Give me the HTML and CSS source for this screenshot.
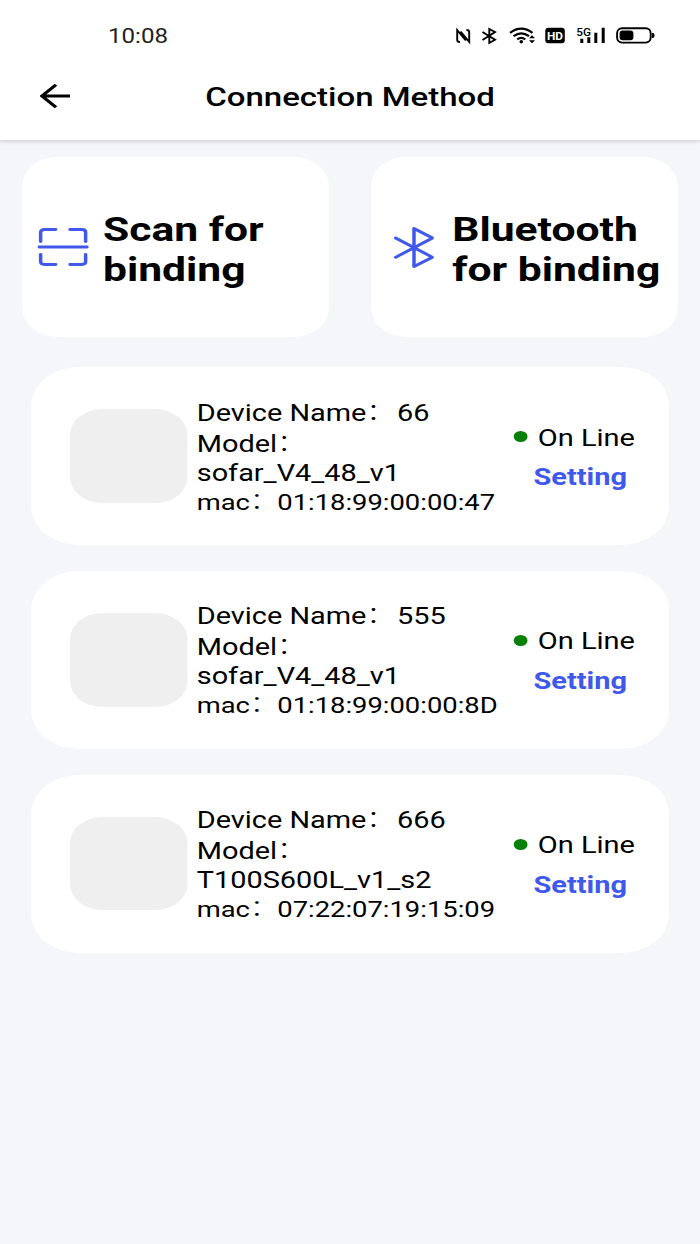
FILE: index.html
```html
<!DOCTYPE html>
<html lang="en">
<head>
    <meta charset="UTF-8">
    <meta name="viewport" content="width=device-width, initial-scale=1.0">
    <title>Connection Method</title>
    <link rel="stylesheet" href="styles.css">
</head>
<body>
    <div class="screen">
        <header class="header">
            <div class="status-bar">
                <span class="time">10:08</span>
                <svg class="status-icons" viewBox="456 24 200 24" preserveAspectRatio="none">
                    <!-- nfc -->
                    <path class="line" d="M461 42Q458.2 42 458.2 40V30.2L466.8 40.5M467.4 30Q470.2 30 470.2 32V41.8L461.6 31.5"/>
                    <!-- bluetooth -->
                    <path class="line" d="M483.5 32L496 39.8L490.3 43V29L496 32L483.5 40"/>
                    <!-- wifi -->
                    <path class="line wifi" d="M511 32.8Q522.3 24.5 533.5 32.8M514.5 36.2Q522.3 30.5 530 36.2M518.2 39.3Q522.3 36.5 526.3 39.3"/>
                    <circle cx="522.3" cy="41.8" r="1.8"/>
                    <path d="M530 38.2L533 35.2L536 38.2ZM530 40.2H536L533 43.2Z"/>
                    <!-- hd -->
                    <rect x="546.3" y="27.7" width="19.5" height="15.6" rx="3"/>
                    <text class="hd" x="548" y="39.8" textLength="16" lengthAdjust="spacingAndGlyphs">HD</text>
                    <!-- signal -->
                    <text class="net" x="577.3" y="35.6" textLength="14.7" lengthAdjust="spacingAndGlyphs">5G</text>
                    <path class="bars" d="M582.8 38.8V43M589.8 37.2V43M596.8 32.8V43M604.2 27.8V43"/>
                    <!-- battery -->
                    <rect class="line" x="618.1" y="28.2" width="33.6" height="14.4" rx="5"/>
                    <rect x="620.6" y="30.5" width="13.8" height="9.8" rx="3"/>
                    <path d="M653 33H654Q655.5 33 655.5 35.4T654 38H653Z"/>
                </svg>
            </div>
            <div class="nav-bar">
                <svg class="back" viewBox="0 0 25 25"><path d="M24 12H1.5M12.8 0.8L1.5 12L12.8 23.2"/></svg>
                <h1 class="title">Connection Method</h1>
            </div>
        </header>

        <div class="methods">
            <div class="method">
                <svg class="scan-icon" viewBox="0 0 41 40"><path d="M2.5 13.5V4.5Q2.5 1.5 5.5 1.5H14.5M26 1.5H35.5Q38.5 1.5 38.5 4.5V13.5M38.5 26.5V33.5Q38.5 36.5 35.5 36.5H26M14.5 36.5H5.5Q2.5 36.5 2.5 33.5V26.5M1.3 19H39.7"/></svg>
                <h2>Scan for<br>binding</h2>
            </div>
            <div class="method">
                <svg class="bluetooth-icon" viewBox="0 0 32 41"><path d="M1.5 11L31 30.3L16.2 39.5V1.5L31 11L1.5 30.3"/></svg>
                <h2>Bluetooth<br>for binding</h2>
            </div>
        </div>

        <div class="devices">
            <div class="device">
                <div class="photo"></div>
                <div class="info">
                    <p>Device Name<span class="colon">：</span>66</p>
                    <p>Model<span class="colon">：</span></p>
                    <p class="model">sofar_V4_48_v1</p>
                    <p class="mac">mac<span class="colon">：</span>01:18:99:00:00:47</p>
                </div>
                <div class="state">
                    <p class="online">On Line</p>
                    <a class="setting">Setting</a>
                </div>
            </div>
            <div class="device">
                <div class="photo"></div>
                <div class="info">
                    <p>Device Name<span class="colon">：</span>555</p>
                    <p>Model<span class="colon">：</span></p>
                    <p class="model">sofar_V4_48_v1</p>
                    <p class="mac">mac<span class="colon">：</span>01:18:99:00:00:8D</p>
                </div>
                <div class="state">
                    <p class="online">On Line</p>
                    <a class="setting">Setting</a>
                </div>
            </div>
            <div class="device">
                <div class="photo"></div>
                <div class="info">
                    <p>Device Name<span class="colon">：</span>666</p>
                    <p>Model<span class="colon">：</span></p>
                    <p class="model">T100S600L_v1_s2</p>
                    <p class="mac">mac<span class="colon">：</span>07:22:07:19:15:09</p>
                </div>
                <div class="state">
                    <p class="online">On Line</p>
                    <a class="setting">Setting</a>
                </div>
            </div>
        </div>
    </div>
</body>
</html>
```

FILE: styles.css
```css
* {
    box-sizing: border-box;
}
body {
    margin: 0;
    background: #f5f6fa;
    font-family: Roboto, "Noto Sans CJK SC", sans-serif;
    color: #000;
    overflow-x: hidden;
}
h1, h2, p {
    margin: 0;
}
/* 560px wide layout, widened to fill 700px */
.screen {
    width: 560px;
    height: 1244px;
    transform: scaleX(1.25);
    transform-origin: 0 0;
}
.header {
    height: 140px;
    background: #fff;
    box-shadow: 0 1px 4px rgba(0, 0, 0, 0.2);
}
.status-bar {
    display: flex;
    justify-content: space-between;
    align-items: center;
    height: 71px;
    padding: 1px 35.7px 0 86.4px;
}
.time {
    font-size: 19.3px;
    color: #222;
}
.status-icons {
    width: 160px;
    height: 24px;
}
.line {
    fill: none;
    stroke: #000;
    stroke-width: 1.9;
}
.wifi {
    stroke-width: 2.1;
}
.bars {
    stroke: #000;
    stroke-width: 3;
}
.hd {
    font-size: 11.5px;
    font-weight: 700;
    fill: #fff;
}
.net {
    font-size: 11px;
    font-weight: 500;
}
.nav-bar {
    display: flex;
    align-items: center;
    height: 51px;
    padding: 0 31.5px;
}
.back {
    width: 25px;
    height: 25px;
    margin-right: -25px;
    fill: none;
    stroke: #000;
    stroke-width: 2.8;
}
.title {
    flex: 1;
    text-align: center;
    font-size: 26.4px;
    font-weight: 500;
}
.methods {
    display: flex;
    gap: 34px;
    padding: 17px 17.6px 0;
}
.method {
    display: flex;
    align-items: center;
    width: 245.4px;
    height: 180px;
    padding-left: 12.8px;
    background: #fff;
    border-radius: 28px;
}
.method svg {
    fill: none;
    stroke: #4059ea;
    stroke-width: 2.8;
    stroke-linecap: round;
    stroke-linejoin: round;
}
.scan-icon {
    width: 41px;
    height: 40px;
    margin-top: 2px;
}
.bluetooth-icon {
    width: 32px;
    height: 41px;
    margin: 0 4px 0 5px;
}
.method h2 {
    margin: 3px 0 0 11px;
    font-size: 34.1px;
    line-height: 40px;
    font-weight: 700;
    white-space: nowrap;
}
.devices {
    display: flex;
    flex-direction: column;
    gap: 25.8px;
    padding: 30px 25px;
}
.device {
    display: flex;
    align-items: center;
    height: 178px;
    padding: 0 27px 0 31px;
    background: #fff;
    border-radius: 38px;
}
.photo {
    width: 93.5px;
    height: 93.5px;
    border-radius: 26px;
    background: #efefef;
}
.info {
    flex: 1;
    margin-left: 7.9px;
    padding-top: 4px;
    font-size: 23.1px;
    line-height: 31px;
    white-space: nowrap;
}
.info .model {
    line-height: 27px;
}
.info .mac {
    font-size: 21.9px;
    line-height: 32px;
}
.colon {
    line-height: 1;
    vertical-align: 2px;
    font-weight: 300;
    margin-right: 1.5px;
}
.mac .colon {
    margin-right: 0;
}
.state {
    font-size: 23.2px;
    line-height: 39.5px;
    padding-top: 4px;
}
.online {
    display: flex;
    align-items: center;
}
.online::before {
    content: "";
    width: 11px;
    height: 11px;
    margin: -3px 8px 0 -1px;
    border-radius: 50%;
    background: #078007;
}
.setting {
    display: block;
    margin-left: 14.5px;
    font-weight: 700;
    color: #4059ea;
}
```
